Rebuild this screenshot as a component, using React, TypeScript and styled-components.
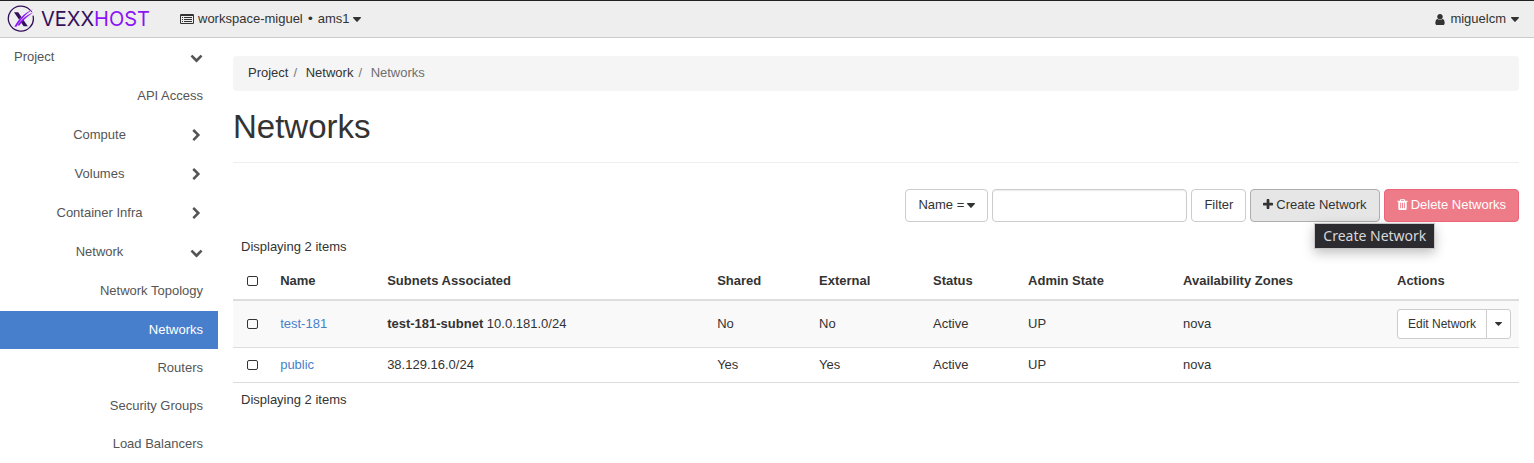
import React from "react";
import styled, { createGlobalStyle, css } from "styled-components";

const GlobalStyle = createGlobalStyle`
  *, *::before, *::after { box-sizing: border-box; }
  body {
    margin: 0;
    background: #fff;
    color: #333;
    font: 13px/18px "Liberation Sans", Arial, sans-serif;
  }
  button, input, select { font: inherit; color: inherit; margin: 0; }
  a { color: inherit; text-decoration: none; }
`;

/* ---------- icons ---------- */

const PATHS = {
  down: "M1683 808l-742 741q-19 19-45 19t-45-19l-742-741q-19-19-19-45.5t19-45.5l166-165q19-19 45-19t45 19l531 531 531-531q19-19 45-19t45 19l166 165q19 19 19 45.5t-19 45.5z",
  right:
    "M1363 877l-742 742q-19 19-45 19t-45-19l-166-166q-19-19-19-45t19-45l531-531-531-531q-19-19-19-45t19-45l166-166q19-19 45-19t45 19l742 742q19 19 19 45t-19 45z",
  plus: "M1600 736v192q0 40-28 68t-68 28h-416v416q0 40-28 68t-68 28h-192q-40 0-68-28t-28-68v-416h-416q-40 0-68-28t-28-68v-192q0-40 28-68t68-28h416v-416q0-40 28-68t68-28h192q40 0 68 28t28 68v416h416q40 0 68 28t28 68z",
  user: "M1536 1399q0 109-62.5 187t-150.5 78h-854q-88 0-150.5-78t-62.5-187q0-85 8.5-160.5t31.5-152 58.5-131 94-89 134.5-34.5q131 128 313 128t313-128q76 0 134.5 34.5t94 89 58.5 131 31.5 152 8.5 160.5zm-256-887q0 159-112.5 271.5t-271.5 112.5-271.5-112.5-112.5-271.5 112.5-271.5 271.5-112.5 271.5 112.5 112.5 271.5z",
  trash:
    "M704 1376v-704q0-14-9-23t-23-9h-64q-14 0-23 9t-9 23v704q0 14 9 23t23 9h64q14 0 23-9t9-23zm256 0v-704q0-14-9-23t-23-9h-64q-14 0-23 9t-9 23v704q0 14 9 23t23 9h64q14 0 23-9t9-23zm256 0v-704q0-14-9-23t-23-9h-64q-14 0-23 9t-9 23v704q0 14 9 23t23 9h64q14 0 23-9t9-23zm-544-992h448l-48-117q-7-9-17-11h-317q-10 2-17 11zm928 32v64q0 14-9 23t-23 9h-96v948q0 83-47 143.5t-113 60.5h-832q-66 0-113-58.5t-47-141.5v-952h-96q-14 0-23-9t-9-23v-64q0-14 9-23t23-9h309l70-167q15-37 54-63t79-26h320q40 0 79 26t54 63l70 167h309q14 0 23 9t9 23z",
};

const Svg = styled.svg`
  display: block;
  flex: none;
  fill: currentColor;
`;

const Icon = ({ name, box = "0 0 1792 1792", width = 13 }: { name: keyof typeof PATHS; box?: string; width?: number }) => (
  <Svg width={width} height={13} viewBox={box} aria-hidden="true">
    <path d={PATHS[name]} />
  </Svg>
);

const Caret = ({ size = 8 }: { size?: number }) => (
  <Svg width={size} height={size === 8 ? 5 : 4} viewBox="384 640 1024 576" preserveAspectRatio="none" aria-hidden="true">
    <path d="M1408 704q0 26-19 45l-448 448q-19 19-45 19t-45-19l-448-448q-19-19-19-45t19-45 45-19h896q26 0 45 19t19 45z" />
  </Svg>
);

const ListIcon = () => (
  <Svg width={14} height={12} viewBox="0 0 14 12" aria-hidden="true">
    <path fillRule="evenodd" d="M1.2 1h11.6q1.2 0 1.2 1.2v7.6q0 1.2-1.2 1.2h-11.6q-1.2 0-1.2-1.2v-7.6q0-1.2 1.2-1.2zM1 3v6.7q0 .3.3.3h11.4q.3 0 .3-.3v-6.7z" />
    <path d="M2 4h1v1h-1zM4 4h8v1h-8zM2 6h1v1h-1zM4 6h8v1h-8zM2 8h1v1h-1zM4 8h8v1h-8z" />
  </Svg>
);

const LogoMark = () => (
  <svg width="28" height="28" viewBox="0 0 28 28" fill="none" aria-hidden="true">
    <path d="M24.6 7.2A12.5 12.5 0 1 0 26 10.6" stroke="#35105a" strokeWidth="1.3" />
    <path d="M7 7.3h4.2l9.6 14h-4.2z" fill="#35105a" />
    <path d="M9 20.6Q14.5 12.5 24 6.5" stroke="#eee" strokeWidth="3" />
    <path d="M7.4 21.8C11 14.8 16.5 8.4 26 4.2C18.6 9.2 13.5 14.6 9.4 21.8z" fill="#8a14f5" />
    <path d="M10.6 20.4C14 14.6 19 10 26.4 7.2C20.2 11.4 16 15.4 12.4 20.4z" fill="#8a14f5" />
  </svg>
);

/* ---------- top bar ---------- */

const TopBar = styled.header`
  display: flex;
  align-items: center;
  height: 38px;
  padding: 0 15px 0 7px;
  background: #eee;
  border-top: 1px solid #222;
  border-bottom: 1px solid #ccc;
`;

const Brand = styled.a`
  display: flex;
  align-items: center;
  gap: 6px;
  width: 173px;
  color: #35105a;
  font: 20px/28px Inter, sans-serif;
`;

const BrandAccent = styled.span`
  color: #8a14f5;
`;

const MenuButton = styled.button`
  display: flex;
  align-items: center;
  gap: 4px;
  padding: 0;
  border: 0;
  background: none;
`;

const Bullet = styled.span`
  font-family: "DejaVu Sans", sans-serif;
  line-height: 13px;
`;

const UserMenu = styled(MenuButton)`
  gap: 5px;
  margin-left: auto;
`;

/* ---------- side bar ---------- */

const Body = styled.div`
  display: flex;
  align-items: flex-start;
`;

const SideNav = styled.nav`
  flex: none;
  width: 218px;
  color: #555;
`;

const Group = styled.button`
  display: flex;
  align-items: center;
  gap: 5px;
  width: 100%;
  height: 39px;
  padding: 0 15px 1px 14px;
  border: 0;
  background: none;
`;

const GroupLabel = styled.span<{ $top?: boolean }>`
  flex: 1;
  text-align: ${(p) => (p.$top ? "left" : "center")};
`;

const Leaf = styled.a<{ $active?: boolean; $tall?: boolean }>`
  display: flex;
  align-items: center;
  justify-content: flex-end;
  height: ${(p) => (p.$tall ? 39 : 38)}px;
  padding: 0 15px 1px;
  ${(p) =>
    p.$active &&
    css`
      background: #487fcd;
      color: #fff;
    `}
`;

/* ---------- content ---------- */

const Main = styled.main`
  flex: 1;
  min-width: 0;
  padding: 18px 15px;
`;

const Crumbs = styled.ol`
  display: flex;
  margin: 0;
  padding: 8px 15px 9px;
  list-style: none;
  background: #f5f5f5;
  border-radius: 4px;
`;

const Crumb = styled.li<{ $current?: boolean }>`
  color: ${(p) => (p.$current ? "#6f6f6f" : "#333")};
  &:not(:first-child)::before {
    content: "/\\00a0";
    padding: 0 5px;
    color: #777;
  }
`;

const Title = styled.h1`
  margin: 18px 0 26px;
  padding-bottom: 17px;
  border-bottom: 1px solid #eee;
  font-size: 33px;
  line-height: 36px;
  font-weight: 400;
`;

const Toolbar = styled.form`
  display: flex;
  justify-content: flex-end;
  gap: 4px;
`;

const control = css`
  height: 33px;
  border: 1px solid #ccc;
  border-radius: 4px;
  background: #fff;
`;

const Button = styled.button<{ $tone?: "hover" | "danger" }>`
  ${control}
  position: relative;
  display: flex;
  align-items: center;
  gap: 3px;
  padding: 0 12px 2px;
  white-space: nowrap;
  ${(p) =>
    p.$tone === "hover" &&
    css`
      background: #e6e6e6;
      border-color: #adadad;
    `}
  ${(p) =>
    p.$tone === "danger" &&
    css`
      background: #ee7c88;
      border-color: #ec6478;
      color: #fff;
    `}
`;

const SelectBox = styled.span`
  display: grid;
  align-items: center;
  > * { grid-area: 1 / 1; }
  > svg {
    justify-self: end;
    margin-right: 13px;
    pointer-events: none;
  }
`;

const Select = styled.select`
  ${control}
  appearance: none;
  width: 83px;
  padding: 0 12px 2px;
`;

const FilterInput = styled.input`
  ${control}
  width: 195px;
  padding: 6px 12px;
  box-shadow: inset 0 1px 1px rgba(0, 0, 0, 0.08);
`;

const Tooltip = styled.span`
  position: absolute;
  top: 33px;
  left: 63px;
  padding: 2px 8px;
  background: #2b2b30;
  border: 1px solid #c8c8cb;
  box-shadow: 0 4px 12px rgba(0, 0, 0, 0.25);
  color: #d8d8da;
  font: 14px/20px "Noto Sans", sans-serif;
`;

const Table = styled.table`
  width: 100%;
  table-layout: fixed;
  border-collapse: separate;
  border-spacing: 0;
  margin-top: 8px;
`;

const Note = styled.caption`
  padding: 8px;
  text-align: left;
`;

const Count = styled.p`
  margin: 0;
  padding: 8px;
`;

const Th = styled.th`
  padding: 8px 8px 9px;
  border-bottom: 2px solid #ddd;
  text-align: left;
`;

const Row = styled.tr`
  &:nth-child(odd) { background: #f9f9f9; }
`;

const Td = styled.td`
  padding: 8px;
  border-bottom: 1px solid #ddd;
`;

const CheckCell = styled.label`
  display: flex;
  align-items: center;
  height: 18px;
  padding: 0 0 1px 6px;
`;

const Check = styled.input`
  appearance: none;
  width: 11px;
  height: 10px;
  border: 1px solid #333;
  border-radius: 2px;
`;

const NameLink = styled.a`
  color: #487fcd;
`;

const Split = styled.div`
  display: flex;
`;

const SmallButton = styled.button<{ $end?: boolean }>`
  display: flex;
  align-items: center;
  height: 30px;
  padding: ${(p) => (p.$end ? "0 8px" : "0 10px")};
  border: 1px solid #ccc;
  background: #fff;
  font-size: 12px;
  white-space: nowrap;
  border-radius: ${(p) => (p.$end ? "0 3px 3px 0" : "3px 0 0 3px")};
  margin-left: ${(p) => (p.$end ? "-1px" : "0")};
`;

/* ---------- data ---------- */

const COLUMNS = [
  { label: "Name", width: "8.32%" },
  { label: "Subnets Associated", width: "25.66%" },
  { label: "Shared", width: "7.93%" },
  { label: "External", width: "8.86%" },
  { label: "Status", width: "7.39%" },
  { label: "Admin State", width: "12.05%" },
  { label: "Availability Zones", width: "16.64%" },
  { label: "Actions", width: "10.11%" },
];

const NETWORKS = [
  { name: "test-181", subnet: "test-181-subnet", cidr: "10.0.181.0/24", shared: "No", external: "No", editable: true },
  { name: "public", subnet: "", cidr: "38.129.16.0/24", shared: "Yes", external: "Yes", editable: false },
];

const LEAVES = ["Networks", "Routers", "Security Groups", "Load Balancers"];

const NavGroup = ({ label, open, top }: { label: string; open?: boolean; top?: boolean }) => (
  <Group type="button" aria-expanded={!!open}>
    <GroupLabel $top={top}>{label}</GroupLabel>
    <Icon name={open ? "down" : "right"} />
  </Group>
);

export default function App() {
  return (
    <>
      <GlobalStyle />
      <TopBar>
        <Brand href="#">
          <LogoMark />
          <span>
            VEXX<BrandAccent>HOST</BrandAccent>
          </span>
        </Brand>
        <MenuButton type="button" aria-haspopup="menu">
          <ListIcon />
          <span>
            workspace-miguel <Bullet>•</Bullet> ams1
          </span>
          <Caret />
        </MenuButton>
        <UserMenu type="button" aria-haspopup="menu">
          <Icon name="user" width={10} box="256 0 1280 1792" />
          <span>miguelcm</span>
          <Caret />
        </UserMenu>
      </TopBar>
      <Body>
        <SideNav aria-label="Main">
          <NavGroup label="Project" open top />
          <Leaf href="#" $tall>API Access</Leaf>
          <NavGroup label="Compute" />
          <NavGroup label="Volumes" />
          <NavGroup label="Container Infra" />
          <NavGroup label="Network" open />
          <Leaf href="#" $tall>Network Topology</Leaf>
          {LEAVES.map((l) => (
            <Leaf key={l} href="#" $active={l === "Networks"}>
              {l}
            </Leaf>
          ))}
        </SideNav>
        <Main>
          <Crumbs>
            <Crumb><a href="#">Project</a></Crumb>
            <Crumb><a href="#">Network</a></Crumb>
            <Crumb $current>Networks</Crumb>
          </Crumbs>
          <Title>Networks</Title>
          <Toolbar onSubmit={(e) => e.preventDefault()}>
            <SelectBox>
              <Select aria-label="Filter field">
                <option>Name =</option>
              </Select>
              <Caret />
            </SelectBox>
            <FilterInput type="text" aria-label="Filter value" />
            <Button type="submit">Filter</Button>
            <Button type="button" $tone="hover">
              <Icon name="plus" width={10} box="192 0 1408 1792" />
              Create Network
              <Tooltip role="tooltip">Create Network</Tooltip>
            </Button>
            <Button type="button" $tone="danger">
              <Icon name="trash" width={11} box="192 0 1408 1792" />
              Delete Networks
            </Button>
          </Toolbar>
          <Table>
            <Note>Displaying 2 items</Note>
            <colgroup>
              <col />
              {COLUMNS.map((c) => (
                <col key={c.label} style={{ width: c.width }} />
              ))}
            </colgroup>
            <thead>
              <tr>
                <Th>
                  <CheckCell><Check type="checkbox" aria-label="Select all" /></CheckCell>
                </Th>
                {COLUMNS.map((c) => (
                  <Th key={c.label} scope="col">{c.label}</Th>
                ))}
              </tr>
            </thead>
            <tbody>
              {NETWORKS.map((n) => (
                <Row key={n.name}>
                  <Td>
                    <CheckCell><Check type="checkbox" aria-label={`Select ${n.name}`} /></CheckCell>
                  </Td>
                  <Td><NameLink href="#">{n.name}</NameLink></Td>
                  <Td>
                    {n.subnet && <b>{n.subnet}</b>} {n.cidr}
                  </Td>
                  <Td>{n.shared}</Td>
                  <Td>{n.external}</Td>
                  <Td>Active</Td>
                  <Td>UP</Td>
                  <Td>nova</Td>
                  <Td>
                    {n.editable && (
                      <Split>
                        <SmallButton type="button">Edit Network</SmallButton>
                        <SmallButton type="button" $end aria-label="More actions">
                          <Caret size={7} />
                        </SmallButton>
                      </Split>
                    )}
                  </Td>
                </Row>
              ))}
            </tbody>
          </Table>
          <Count>Displaying 2 items</Count>
        </Main>
      </Body>
    </>
  );
}
